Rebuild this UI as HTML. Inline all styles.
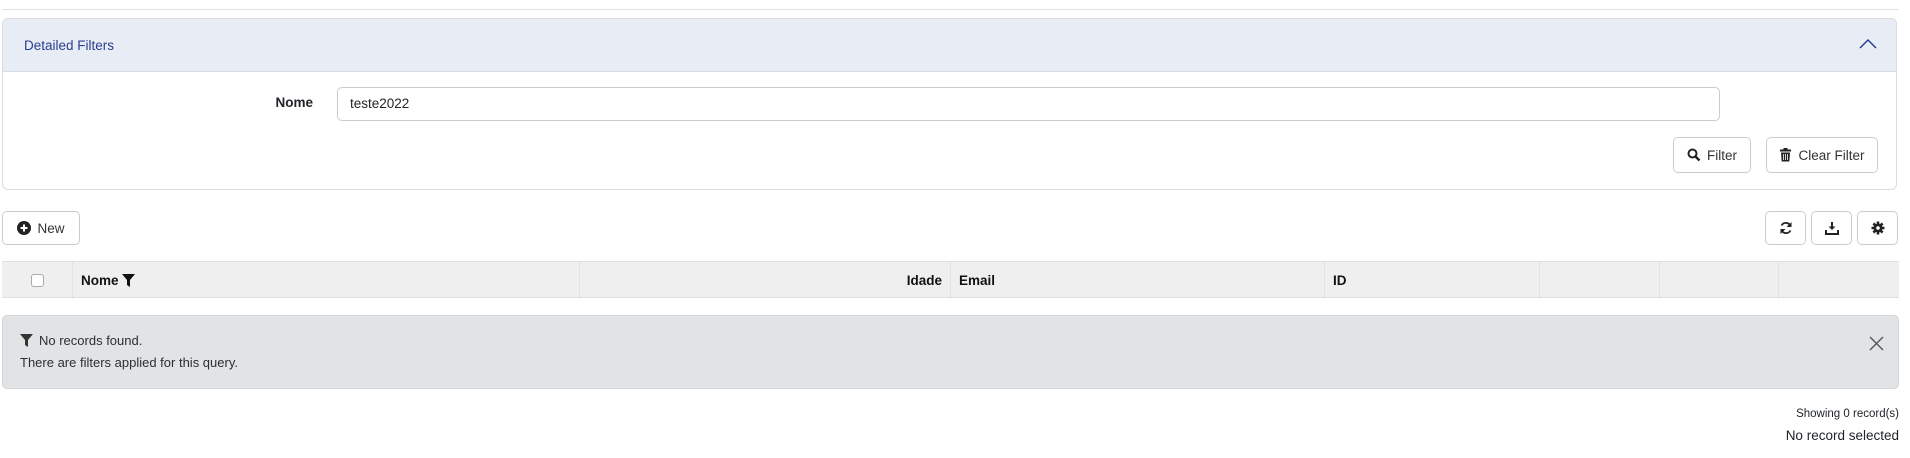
<!DOCTYPE html>
<html><head><meta charset="utf-8"><style>
*{box-sizing:border-box;margin:0;padding:0}
body{width:1910px;height:458px;background:#fff;font-family:"Liberation Sans",Arial,sans-serif;font-size:13.5px;color:#212529;position:relative;overflow:hidden}
.abs{position:absolute}
.btn{position:absolute;border:1px solid #ccc;border-radius:5px;background:#fff;display:flex;align-items:center;justify-content:center;gap:6px;font-size:13.5px;color:#333}
.th{position:absolute;top:0;height:37px;border-right:1px solid #e2e2e2;display:flex;align-items:center;font-weight:bold;font-size:13.5px;color:#111;padding:0 8px}
</style></head><body>
<div class="abs" style="left:2px;top:9px;width:1897px;height:1px;background:#e3e3e3"></div>
<div class="abs" style="left:2px;top:18px;width:1895px;height:172px;border:1px solid #dcdcdc;border-radius:6px;overflow:hidden">
  <div style="height:53px;background:#e8ecf5;border-bottom:1px solid #d6dbe6;display:flex;align-items:center;padding-left:21px;color:#2a3f8f;font-size:13.5px">Detailed Filters</div>
  <svg class="abs" style="left:1856px;top:19px" width="18" height="12" viewBox="0 0 18 12"><path d="M1 10 L9 2 L17 10" fill="none" stroke="#2a3f8f" stroke-width="1.5"/></svg>
</div>
<div class="abs" style="left:200px;top:95px;width:113px;text-align:right;font-weight:bold;font-size:13.5px">Nome</div>
<div class="abs" style="left:337px;top:87px;width:1383px;height:34px;border:1px solid #ccc;border-radius:5px;padding:8px 12px;font-size:13.5px">teste2022</div>
<div class="btn" style="left:1673px;top:137px;width:78px;height:36px"><svg width="14" height="14" viewBox="0 0 14 14"><circle cx="5.5" cy="5.5" r="4" fill="none" stroke="#222" stroke-width="2"/><path d="M8.5 8.5L12.5 12.5" stroke="#222" stroke-width="2.4"/></svg>Filter</div>
<div class="btn" style="left:1766px;top:137px;width:112px;height:36px"><svg width="13" height="14" viewBox="0 0 13 14"><rect x="1" y="1.5" width="11" height="2" fill="#222"/><rect x="4.5" y="0" width="4" height="2" fill="#222"/><path d="M2 4.5h9l-.7 9h-7.6z" fill="#222"/><path d="M4.5 6v6M6.5 6v6M8.5 6v6" stroke="#fff" stroke-width=".8"/></svg>Clear Filter</div>
<div class="btn" style="left:2px;top:211px;width:78px;height:34px"><svg width="14" height="14" viewBox="0 0 14 14"><circle cx="7" cy="7" r="7" fill="#222"/><path d="M7 3.5v7M3.5 7h7" stroke="#fff" stroke-width="2"/></svg>New</div>
<div class="btn" style="left:1765px;top:211px;width:41px;height:34px"><svg width="14" height="14" viewBox="0 0 14 14"><path d="M11.5 5A5 5 0 0 0 2.5 4.5M2.5 9A5 5 0 0 0 11.5 9.5" fill="none" stroke="#222" stroke-width="1.8"/><path d="M12.5 1v5h-5zM1.5 13V8h5z" fill="#222"/></svg></div>
<div class="btn" style="left:1811px;top:211px;width:41px;height:34px"><svg width="14" height="14" viewBox="0 0 14 14"><path d="M7 1v7" stroke="#222" stroke-width="2"/><path d="M3.5 5.5L7 9l3.5-3.5z" fill="#222"/><path d="M1 9v4h12V9" fill="none" stroke="#222" stroke-width="2"/></svg></div>
<div class="btn" style="left:1857px;top:211px;width:41px;height:34px"><svg width="14" height="14" viewBox="0 0 14 14"><circle cx="7" cy="7" r="4.5" fill="#222"/><path d="M7 0.5v13M0.5 7h13M2.4 2.4l9.2 9.2M11.6 2.4l-9.2 9.2" stroke="#222" stroke-width="2.6"/><circle cx="7" cy="7" r="1.8" fill="#fff"/></svg></div>
<div class="abs" style="left:2px;top:261px;width:1897px;height:37px;background:#efefef;border-top:1px solid #e0e0e0;border-bottom:1px solid #dedede">
  <div class="th" style="left:0;width:71px;justify-content:center"><div style="width:13px;height:13px;border:1px solid #aaa;border-radius:3px;background:#fff"></div></div>
  <div class="th" style="left:71px;width:507px">Nome&nbsp;<svg width="13" height="13" viewBox="0 0 13 13"><path d="M0 0h13L8 6v7L5 11V6z" fill="#111"/></svg></div>
  <div class="th" style="left:578px;width:371px;justify-content:flex-end">Idade</div>
  <div class="th" style="left:949px;width:374px">Email</div>
  <div class="th" style="left:1323px;width:215px">ID</div>
  <div class="th" style="left:1538px;width:120px"></div>
  <div class="th" style="left:1658px;width:119px"></div>
</div>
<div class="abs" style="left:2px;top:315px;width:1897px;height:74px;background:#e2e3e5;border:1px solid #d3d6d8;border-radius:5px;font-size:13px;color:#2b2f32">
  <div class="abs" style="left:17px;top:17px;display:flex;align-items:center;gap:6px"><svg width="13" height="13" viewBox="0 0 13 13"><path d="M0 0h13L8 6v7L5 11V6z" fill="#333"/></svg>No records found.</div>
  <div class="abs" style="left:17px;top:39px">There are filters applied for this query.</div>
  <svg class="abs" style="left:1866px;top:20px" width="15" height="15" viewBox="0 0 15 15"><path d="M1 1l13 13M14 1L1 14" stroke="#555" stroke-width="1.4"/></svg>
</div>
<div class="abs" style="right:11px;top:408px;font-size:11.5px">Showing 0 record(s)</div>
<div class="abs" style="right:11px;top:428px;font-size:13.5px">No record selected</div>
</body></html>
